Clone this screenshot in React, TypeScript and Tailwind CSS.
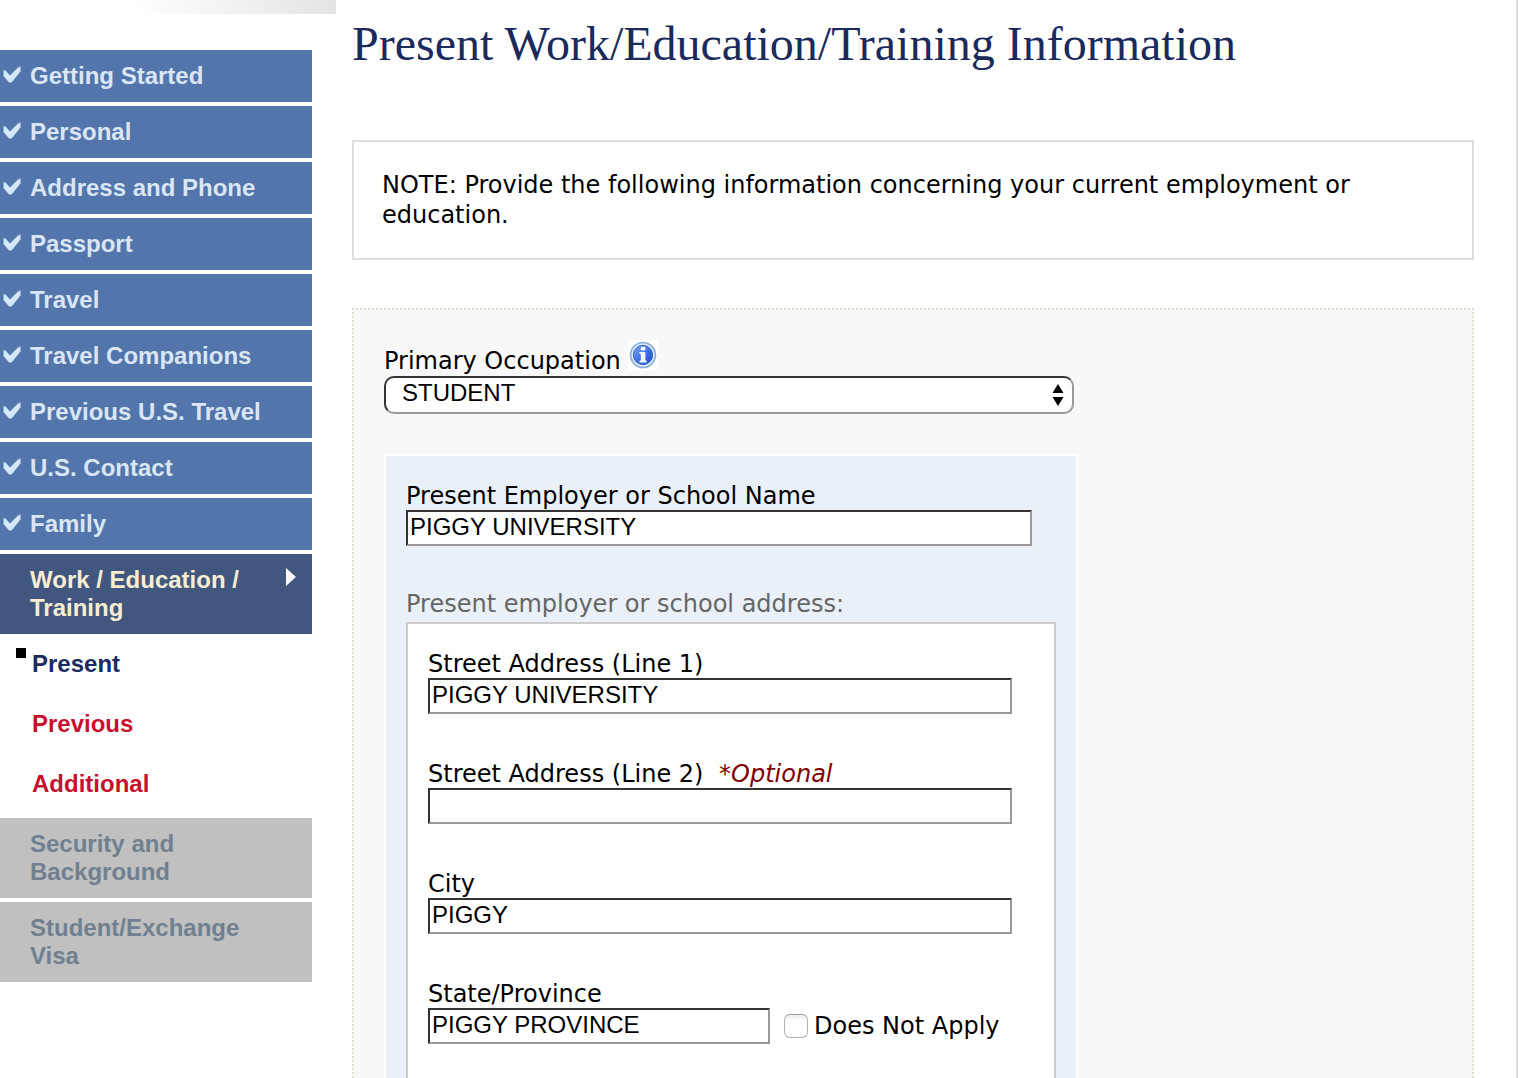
import React, { useState } from "react";

const completed = [
  "Getting Started",
  "Personal",
  "Address and Phone",
  "Passport",
  "Travel",
  "Travel Companions",
  "Previous U.S. Travel",
  "U.S. Contact",
  "Family",
];

const upcoming = ["Security and Background", "Student/Exchange Visa"];

const inputClass =
  "block h-9 w-full border-2 border-t-[#333] border-l-[#333] border-r-[#999] border-b-[#999] bg-white px-[2px] pb-[2px] font-['Liberation_Sans',Arial,sans-serif] text-2xl leading-7 text-black outline-none";

function CheckIcon() {
  return (
    <svg className="h-[18px] w-[18px]" viewBox="0 0 18 18" aria-hidden="true">
      <path d="M0.5 4.5 L2.5 4.5 L7 9.5 L15 1.5 L17.5 0.5 L17.5 5.5 L8.5 16.5 L6 16.5 L0.5 10 Z" fill="#d6eaf6" stroke="#8fb3d6" strokeWidth="1" strokeOpacity="0.6" />
    </svg>
  );
}

function InfoIcon() {
  return (
    <svg className="h-[30px] w-[30px] bg-white" viewBox="0 0 30 30" aria-hidden="true">
      <defs>
        <linearGradient id="info-fill" x1="0" y1="0" x2="1" y2="1">
          <stop offset="0" stopColor="#7fa8f2" />
          <stop offset="0.5" stopColor="#3f74e4" />
          <stop offset="1" stopColor="#1947bd" />
        </linearGradient>
      </defs>
      <circle cx="15" cy="15" r="12.4" fill="#e3edf8" stroke="#8fb2da" strokeWidth="1.8" />
      <circle cx="15" cy="15" r="9.7" fill="url(#info-fill)" stroke="#3d68c4" strokeWidth="1" />
      <rect x="12.8" y="6.8" width="4.6" height="3.8" rx="1" fill="#f2f7ff" />
      <path d="M11.5 12 H17.4 V20.4 H18.6 V22.6 H11.5 V20.4 H12.8 V14 H11.5 Z" fill="#f2f7ff" />
    </svg>
  );
}

function Field({
  id,
  label,
  value,
  optional,
}: {
  id: string;
  label: string;
  value: string;
  optional?: boolean;
}) {
  return (
    <div>
      <label htmlFor={id} className="block h-[30px] leading-8">
        {label}
        {optional && <em className="ml-2 text-[#800000]"> *Optional</em>}
      </label>
      <input id={id} type="text" defaultValue={value} className={inputClass} />
    </div>
  );
}

export default function App() {
  const [notApplicable, setNotApplicable] = useState(false);

  return (
    <div className="flex h-screen overflow-hidden border-r-2 border-[#ddd] bg-white font-['DejaVu_Sans',Verdana,sans-serif] text-2xl text-black">
      <aside className="w-[336px] shrink-0 font-['Liberation_Sans',Arial,sans-serif] leading-7 font-bold">
        <div className="h-[14px] bg-linear-to-r from-white from-40% to-[#e4e4e4]" />
        <nav className="mt-9 mr-6 flex flex-col gap-1">
          {completed.map((name) => (
            <a key={name} href="#" className="flex bg-[#5275ab] py-3 text-[#dae6f4]">
              <span className="w-[30px] shrink-0 pt-1 pl-[3px]">
                <CheckIcon />
              </span>
              {name}
            </a>
          ))}
          <a href="#" className="flex justify-between bg-[#41577f] py-3 pr-4 pl-[30px] text-[#f7edd3]">
            <span className="w-[220px]">Work / Education / Training</span>
            <svg className="mt-[2px] h-[18px] w-[10px]" viewBox="0 0 10 18" aria-hidden="true">
              <path d="M0 0 L10 9 L0 18 Z" fill="#f8f8fb" />
            </svg>
          </a>
          <ul className="-mt-1 flex flex-col">
            <li className="flex">
              <span className="mt-[14px] mr-[6px] ml-4 size-[10px] shrink-0 bg-black" />
              <a href="#" className="py-4 text-[#1b2a61]">Present</a>
            </li>
            <li className="flex pl-8">
              <a href="#" className="py-4 text-[#c8102e]">Previous</a>
            </li>
            <li className="flex pl-8">
              <a href="#" className="py-4 text-[#c8102e]">Additional</a>
            </li>
          </ul>
          {upcoming.map((name) => (
            <a key={name} href="#" className="bg-[#c0c0c0] py-3 pr-12 pl-[30px] text-[#708090]">
              {name}
            </a>
          ))}
        </nav>
      </aside>

      <main className="flex min-w-0 flex-1 flex-col pr-[42px] pl-4">
        <h1 className="mt-4 font-['Liberation_Serif','Times_New_Roman',serif] text-5xl leading-14 text-[#1b2a5c]">
          Present Work/Education/Training Information
        </h1>

        <p className="mt-[68px] border-2 border-[#ddd] p-7 leading-[30px]">
          NOTE: Provide the following information concerning your current employment or education.
        </p>

        <form className="mt-12 flex flex-1 flex-col border-2 border-b-0 border-dotted border-[#e3dfcb] bg-[#f8f8f8] px-[30px] pt-[30px]">
          <div className="flex">
            <label htmlFor="occupation" className="pt-[6px] leading-[30px]">
              Primary Occupation
            </label>
            <button type="button" aria-label="Help: Primary Occupation" className="ml-[7px] self-start">
              <InfoIcon />
            </button>
          </div>
          <div className="relative w-full max-w-[690px]">
            <select
              id="occupation"
              className="block h-[38px] w-full appearance-none rounded-[10px] border-2 border-t-[#333] border-l-[#333] border-r-[#999] border-b-[#999] bg-white px-4 pb-1 font-['Liberation_Sans',Arial,sans-serif] text-2xl leading-7 outline-none"
            >
              <option>STUDENT</option>
            </select>
            <svg className="pointer-events-none absolute top-2 right-[10px] h-[22px] w-[12px]" viewBox="0 0 12 22" aria-hidden="true">
              <path d="M6 0 L11.5 9 H0.5 Z M0.5 13 H11.5 L6 22 Z" fill="#000" />
            </svg>
          </div>

          <div className="mt-10 flex w-full max-w-[694px] flex-1 flex-col border-2 border-b-0 border-white bg-[#e9f0f7] px-5 pt-6">
            <div className="max-w-[626px]">
              <Field id="employer" label="Present Employer or School Name" value="PIGGY UNIVERSITY" />
            </div>
            <h2 className="mt-[42px] h-[30px] leading-8 text-[#666]">Present employer or school address:</h2>
            <div className="mt-1 flex flex-1 flex-col gap-11 border-2 border-b-0 border-[#ccc] bg-white pt-6 pr-[42px] pl-5">
              <Field id="street1" label="Street Address (Line 1)" value="PIGGY UNIVERSITY" />
              <Field id="street2" label="Street Address (Line 2)" value="" optional />
              <Field id="city" label="City" value="PIGGY" />
              <div className="flex items-end pb-8">
                <div className="w-[342px]">
                  <Field id="province" label="State/Province" value="PIGGY PROVINCE" />
                </div>
                <label className="ml-[14px] flex h-9 items-center gap-[6px]">
                  <input
                    type="checkbox"
                    checked={notApplicable}
                    onChange={(e) => setNotApplicable(e.target.checked)}
                    className="size-6 appearance-none rounded-md border border-[#b0b0b0] border-t-[#999] bg-white bg-linear-to-b from-[#eee] to-white to-30% checked:bg-[#5275ab]"
                  />
                  Does Not Apply
                </label>
              </div>
            </div>
          </div>
        </form>
      </main>
    </div>
  );
}
